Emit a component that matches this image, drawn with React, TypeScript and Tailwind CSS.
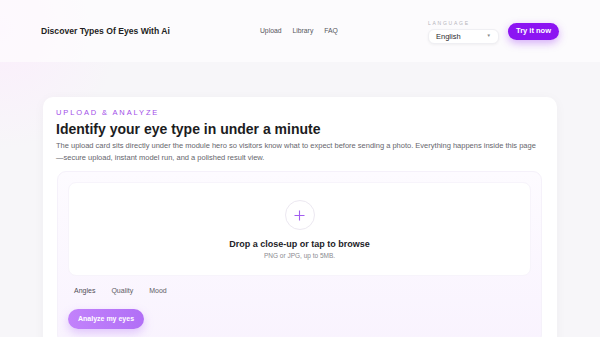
import { useState } from "react";

const navLinks = ["Upload", "Library", "FAQ"];
const tabs = ["Angles", "Quality", "Mood"];

export default function App() {
  const [tab, setTab] = useState("Angles");

  return (
    <div className="min-h-screen bg-[#f7f6f9] bg-[radial-gradient(circle_at_0%_8%,#fbeefc_0,transparent_120px)] font-['Liberation_Sans',Arial,sans-serif] text-[#1b1b1f]">
      {/* Header */}
      <header className="bg-white/60">
        <div className="mx-auto flex h-[62px] max-w-[518px] items-center justify-between">
          <div className="text-[8.6px] font-bold text-[#1f1f24]">Discover Types Of Eyes With Ai</div>
          <nav className="flex items-center gap-[11px] text-[6.8px] text-[#55555c]">
            {navLinks.map((l) => (
              <a key={l} href="#" className="hover:text-black">
                {l}
              </a>
            ))}
          </nav>
          <div className="flex items-center gap-[9px]">
            <div className="flex flex-col pt-[2px]">
              <span className="mb-[2px] text-[5px] uppercase tracking-[0.35em] text-[#b4b4ba]">
                Language
              </span>
              <div className="flex h-[15px] w-[71px] items-center justify-between rounded-[6px] border border-[#efeff3] bg-white px-[7px] text-[7.5px] text-[#2a2a30] shadow-[0_1px_3px_rgba(0,0,0,0.05)]">
                <span>English</span>
                <span className="text-[4.5px] text-[#888]">▼</span>
              </div>
            </div>
            <button className="h-[17px] rounded-full bg-[#8c14f2] px-[8px] text-[7.5px] font-semibold text-white shadow-[0_3px_8px_rgba(140,20,242,0.35)]">
              Try it now
            </button>
          </div>
        </div>
      </header>

      {/* Main */}
      <main className="mx-auto max-w-[514px] pt-[35px]">
        <section className="rounded-[10px] bg-white px-[13px] pt-[10px] pb-[20px] shadow-[0_2px_12px_rgba(30,20,60,0.04)]">
          <div className="text-[7.5px] font-medium uppercase tracking-[0.25em] text-[#a24ee8]">
            Upload &amp; Analyze
          </div>
          <h1 className="mt-[2px] text-[14px] font-bold leading-[19px] text-[#1c1c21]">
            Identify your eye type in under a minute
          </h1>
          <p className="mt-[1px] text-[7.5px] leading-[12px] text-[#66666d]">
            {"The upload card sits directly under the module hero so visitors know what to expect before sending a photo. Everything happens inside this page\u200B\u2014\u2060secure upload, instant model run, and a polished result view."}
          </p>

          <div className="mt-[7px] mr-[2px] ml-[1px] rounded-[9px] border border-[#f5f1fa] bg-gradient-to-b from-[#fdfbff] to-[#f9f3fe] px-[10px] pt-[10px] pb-[14px]">
            <div className="flex h-[94px] flex-col items-center rounded-[8px] border border-[#f7f4fb] bg-white pt-[17px]">
              <div className="flex h-[30px] w-[30px] items-center justify-center rounded-full border border-[#ece8f1] bg-white">
                <svg width="11" height="11" viewBox="0 0 11 11" fill="none">
                  <path d="M5.5 0.5v10M0.5 5.5h10" stroke="#a35ef0" strokeWidth="1.1" />
                </svg>
              </div>
              <div className="mt-[9px] text-[9px] leading-[11px] font-bold text-[#222227]">
                Drop a close-up or tap to browse
              </div>
              <div className="mt-[2px] text-[6.5px] leading-[8px] text-[#8a8a90]">
                PNG or JPG, up to 5MB.
              </div>
            </div>

            <div className="mt-[10px] flex gap-[16px] pl-[6px] text-[7px] text-[#5d5d64]">
              {tabs.map((t) => (
                <button
                  key={t}
                  onClick={() => setTab(t)}
                  className={tab === t ? "text-[#4f4f56]" : ""}
                >
                  {t}
                </button>
              ))}
            </div>

            <button className="mt-[12px] h-[20px] rounded-full bg-gradient-to-r from-[#c282fb] to-[#b16ff6] px-[10px] text-[7px] font-bold text-white shadow-[0_4px_10px_rgba(176,110,246,0.35)]">
              Analyze my eyes
            </button>
          </div>
        </section>
      </main>
    </div>
  );
}
